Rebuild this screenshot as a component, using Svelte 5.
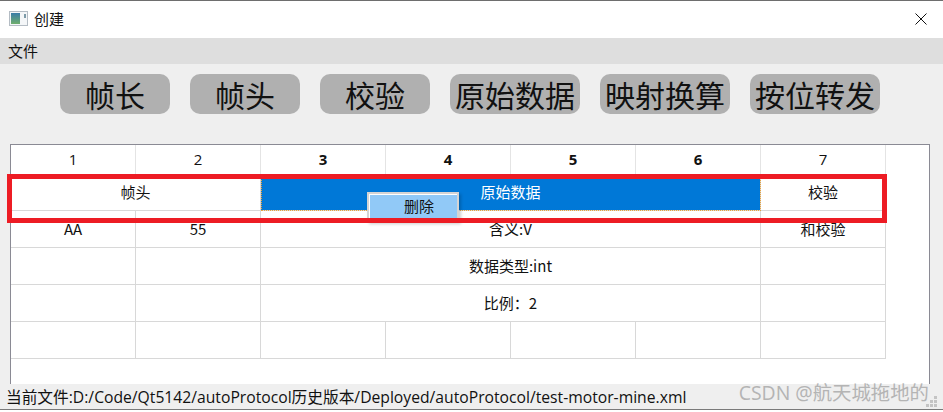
<script lang="ts">
    const tools = ["帧长", "帧头", "校验", "原始数据", "映射换算", "按位转发"];
    const headers = [
        { text: "1", bold: false },
        { text: "2", bold: false },
        { text: "3", bold: true },
        { text: "4", bold: true },
        { text: "5", bold: true },
        { text: "6", bold: true },
        { text: "7", bold: false }
    ];
    const emptyCols = [1, 2, 3, 4, 5, 6, 7];
</script>

<div class="window">
    <header class="titlebar">
        <svg class="app-icon" width="20" height="16" viewBox="0 0 20 16">
            <defs>
                <linearGradient id="pane" x1="0" y1="0" x2="0" y2="1">
                    <stop offset="0" stop-color="#3a7da8" />
                    <stop offset="1" stop-color="#6fae6c" />
                </linearGradient>
            </defs>
            <rect x="0.5" y="0.5" width="18" height="14" fill="#f4f6f8" stroke="#b4bcc4" />
            <rect x="2" y="2" width="9" height="11" fill="url(#pane)" />
            <rect x="15" y="3" width="2" height="4" fill="#7d9aa8" />
        </svg>
        <span class="title">创建</span>
        <svg class="close" width="12" height="12" viewBox="0 0 12 12">
            <path d="M0.5 0.5 L11.5 11.5 M11.5 0.5 L0.5 11.5" stroke="#111" stroke-width="1" fill="none" />
        </svg>
    </header>

    <nav class="menubar"><span>文件</span></nav>

    <div class="toolbar">
        {#each tools as tool}
            <button class="tool">{tool}</button>
        {/each}
    </div>

    <section class="frame">
        <div class="grid">
            {#each headers as h}
                <div class="head" class:bold={h.bold}>{h.text}</div>
            {/each}

            <div class="cell span2">帧头</div>
            <div class="cell span4 selected">原始数据</div>
            <div class="cell">校验</div>

            <div class="cell">AA</div>
            <div class="cell">55</div>
            <div class="cell span4">含义:V</div>
            <div class="cell">和校验</div>

            <div class="cell"></div>
            <div class="cell"></div>
            <div class="cell span4">数据类型:int</div>
            <div class="cell"></div>

            <div class="cell"></div>
            <div class="cell"></div>
            <div class="cell span4">比例：2</div>
            <div class="cell"></div>

            {#each emptyCols as c}
                <div class="cell" data-col={c}></div>
            {/each}
        </div>

        <div class="popup"><span>删除</span></div>
        <div class="highlight"></div>
    </section>

    <footer class="statusbar">
        <span>当前文件:D:/Code/Qt5142/autoProtocol历史版本/Deployed/autoProtocol/test-motor-mine.xml</span>
    </footer>
    <div class="rest"></div>

    <div class="watermark">CSDN @航天城拖地的</div>
    <svg class="grip" width="12" height="12" viewBox="0 0 12 12">
        <path d="M8 0h3v3H8z M4 4h3v3H4z M8 4h3v3H8z M0 8h3v3H0z M4 8h3v3H4z M8 8h3v3H8z" fill="#c4c4c4" />
    </svg>
</div>

<style>
    :global(body) {
        margin: 0;
        background: #fff;
    }

    .window {
        position: relative;
        width: 943px;
        height: 412px;
        overflow: hidden;
        display: flex;
        flex-direction: column;
        background: #efefef;
        font-family: "Noto Sans CJK SC", "Open Sans", sans-serif;
        font-size: 15px;
        color: #111;
    }

    .titlebar {
        flex: none;
        display: flex;
        align-items: center;
        padding: 0 16px 2px 9px;
        height: 35px;
        background: #fff;
        border-top: 1px solid #6e6e6e;
    }

    .title {
        margin-left: 5px;
    }

    .close {
        margin-left: auto;
    }

    .menubar {
        height: 24px;
        flex: none;
        display: flex;
        align-items: center;
        padding: 0 0 2px 8px;
        background: #dedede;
    }

    .toolbar {
        height: 80px;
        flex: none;
        box-sizing: border-box;
        display: flex;
        gap: 20px;
        padding: 10px 0 0 60px;
    }

    .tool {
        min-width: 110px;
        height: 40px;
        padding: 0 5px;
        border: none;
        border-radius: 10px;
        background: #b0b0b0;
        font-family: inherit;
        font-size: 30px;
        line-height: 40px;
        color: #111;
    }

    .frame {
        position: relative;
        height: 240px;
        flex: none;
        box-sizing: border-box;
        margin: 0 13px 0 10px;
        border: 1px solid #8a8a94;
        border-bottom: none;
        background: #fff;
    }

    .grid {
        display: grid;
        grid-template-columns: repeat(7, 125px);
        grid-template-rows: 29px repeat(5, 37px);
    }

    .head,
    .cell {
        box-sizing: border-box;
        display: flex;
        align-items: center;
        justify-content: center;
        border-right: 1px solid #d8d8d8;
    }

    .head {
        padding-bottom: 2px;
        border-right-color: #e4e4e4;
        font-family: "Open Sans", "Noto Sans CJK SC", sans-serif;
    }

    .bold {
        font-weight: 700;
    }

    .cell {
        padding-bottom: 2px;
        border-bottom: 1px solid #d8d8d8;
    }

    .span2 {
        grid-column: span 2;
    }

    .span4 {
        grid-column: span 4;
    }

    .selected {
        background: #0078d7;
        color: #fff;
        outline: 1px dotted #e8a33d;
        outline-offset: -1px;
        border-right-color: #d8d8d8;
    }

    .popup {
        position: absolute;
        left: 356px;
        top: 47px;
        width: 92px;
        height: 30px;
        box-sizing: border-box;
        border: 2px solid #d4d4d4;
        border-bottom: none;
        padding: 1px 0 0 1px;
        background: #fff;
        box-shadow: 2px 2px 3px rgba(0, 0, 0, 0.2);
    }

    .popup span {
        display: block;
        height: 100%;
        padding: 1px 0 0 34px;
        box-sizing: border-box;
        line-height: 20px;
        background: #91c9f7;
    }

    .highlight {
        position: absolute;
        left: -4px;
        top: 29px;
        width: 880px;
        height: 49px;
        box-sizing: border-box;
        border: 5px solid #ed1c24;
    }

    .statusbar {
        height: 26px;
        flex: none;
        box-sizing: border-box;
        display: flex;
        align-items: center;
        padding: 0 0 1px 6px;
        background: #efefef;
        border-bottom: 1px solid #7a7a7a;
        font-family: "Open Sans", "Noto Sans CJK SC", sans-serif;
        font-size: 15.7px;
        white-space: nowrap;
    }

    .rest {
        flex: 1;
        background: #fff;
    }

    .watermark {
        position: absolute;
        right: 14px;
        top: 381px;
        font-family: "Open Sans", "Noto Sans CJK SC", sans-serif;
        font-size: 19.4px;
        line-height: 24px;
        color: #b4b4b4;
        white-space: nowrap;
    }

    .grip {
        position: absolute;
        right: 5px;
        top: 396px;
    }
</style>
